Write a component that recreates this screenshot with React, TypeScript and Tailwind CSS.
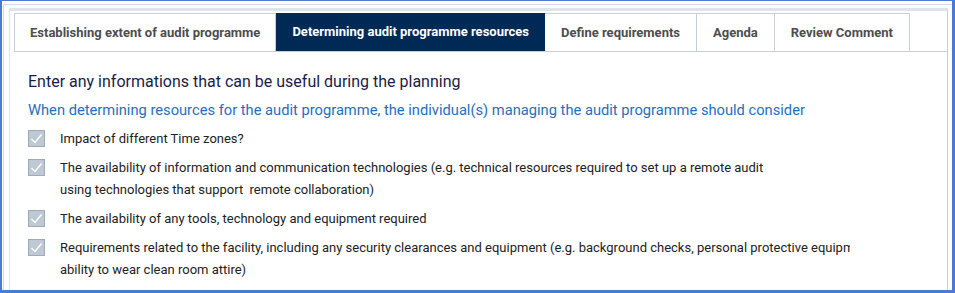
const tabs = [
  'Establishing extent of audit programme',
  'Determining audit programme resources',
  'Define requirements',
  'Agenda',
  'Review Comment',
]

const items: string[][] = [
  ['Impact of different Time zones?'],
  [
    'The availability of information and communication technologies (e.g. technical resources required to set up a remote audit',
    'using technologies that support  remote collaboration)',
  ],
  ['The availability of any tools, technology and equipment required'],
  [
    'Requirements related to the facility, including any security clearances and equipment (e.g. background checks, personal protective equipment and',
    'ability to wear clean room attire)',
  ],
]

function Check() {
  return (
    <svg width="17" height="17" viewBox="0 0 17 17" className="mt-[2px] shrink-0">
      <rect x="0.5" y="0.5" width="16" height="16" fill="#bfc9d5" stroke="#9eaaba" />
      <path d="M3.5 9 L7 12.5 L13.5 4.5" fill="none" stroke="#ffffff" strokeWidth="1.4" />
    </svg>
  )
}

export default function App() {
  return (
    <div
      className="h-[293px] w-[955px] overflow-hidden border-t border-r-[3px] border-b-[3px] border-l-2 border-[#4a7bd0] bg-white"
      style={{ fontFamily: 'Roboto, "Liberation Sans", sans-serif' }}
    >
      <div className="ml-[1px] mt-[3px] h-[286px] border-t border-l border-[#d5dce5] pl-[5px] pt-[3px]">
        <div className="mr-[4px] h-full border-t-[3px] border-r border-l border-[#dfe4ea] border-r-[#c5d0dc] pt-[2px] pl-[5px]">
          <div className="-ml-[1px] flex border-b border-[#c5d0dc]">
            {tabs.map((t, i) => (
              <div
                key={t}
                className={
                  i === 1
                    ? 'flex h-[38px] items-center bg-[#002a56] px-[16px] text-[13px] font-bold text-white'
                    : i === 0
                      ? 'flex h-[38px] items-center border-t border-r border-l border-[#c5d0dc] px-[15px] text-[13px] font-bold text-[#4d4d4d]'
                      : 'flex h-[38px] items-center border-t border-r border-[#c5d0dc] px-[16px] text-[13px] font-bold text-[#4d4d4d]'
                }
              >
                {t}
              </div>
            ))}
          </div>
          <div className="pl-[13px] pt-[18px]">
            <div className="text-[16px] leading-[24px] text-[#1a1c4a]">
              Enter any informations that can be useful during the planning
            </div>
            <div className="mt-[4px] text-[14.7px] leading-[24px] text-[#1f6fc0]">
              When determining resources for the audit programme, the individual(s) managing the audit programme should consider
            </div>
            <div className="mt-[6px] flex flex-col gap-[7px]">
              {items.map((lines) => (
                <div key={lines[0]} className="flex items-start gap-[15px]">
                  <Check />
                  <div className="w-[790px] overflow-hidden whitespace-pre text-[13px] leading-[22px] text-[#222]">
                    {lines.map((l) => (
                      <div key={l}>{l}</div>
                    ))}
                  </div>
                </div>
              ))}
            </div>
          </div>
        </div>
      </div>
    </div>
  )
}
